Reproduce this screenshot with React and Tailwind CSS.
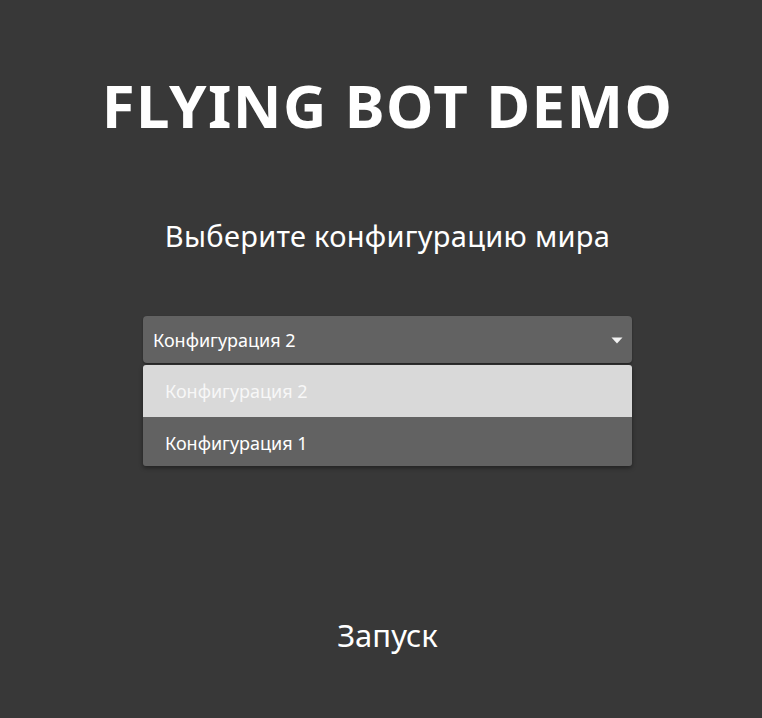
import React from "react";

const font = { fontFamily: '"Noto Sans", "Open Sans", sans-serif' };

export default function App() {
  return (
    <div
      className="w-[762px] h-[718px] bg-[#383838] flex flex-col items-center pl-[13px] text-white"
      style={font}
    >
      <h1 className="mt-[70px] text-[60px] leading-[70px] font-bold tracking-[1.4px]">
        FLYING BOT DEMO
      </h1>
      <p className="mt-[76px] text-[29px] leading-[40px] tracking-[0.3px]">
        Выберите конфигурацию мира
      </p>
      <div className="relative mt-[60px] w-[489px]">
        <div className="h-[47px] rounded-[4px] bg-[#626262] flex items-center justify-between pl-[10px] pr-[9px] pt-[1px] shadow-[0_1px_2px_rgba(0,0,0,0.4)]">
          <span className="text-[18px]">Конфигурация 2</span>
          <svg width="12" height="7" viewBox="0 0 12 7">
            <path d="M0.5 0.5 H11.5 L6 6.5 Z" fill="#f2f2f2" />
          </svg>
        </div>
        <div className="absolute left-0 right-0 top-[49px] h-[101px] rounded-[3px] overflow-hidden shadow-[0_2px_4px_rgba(0,0,0,0.4)]">
          <div className="h-[52px] bg-[#d9d9d9] flex items-center pl-[22px] pt-[1px] text-[18px] text-[#f7f7f7]">
            Конфигурация 2
          </div>
          <div className="h-[52px] bg-[#626262] flex items-center pl-[22px] pt-[1px] text-[18px] text-white">
            Конфигурация 1
          </div>
        </div>
      </div>
      <button className="mt-[252px] text-[31px] leading-[40px] text-white">
        Запуск
      </button>
    </div>
  );
}
